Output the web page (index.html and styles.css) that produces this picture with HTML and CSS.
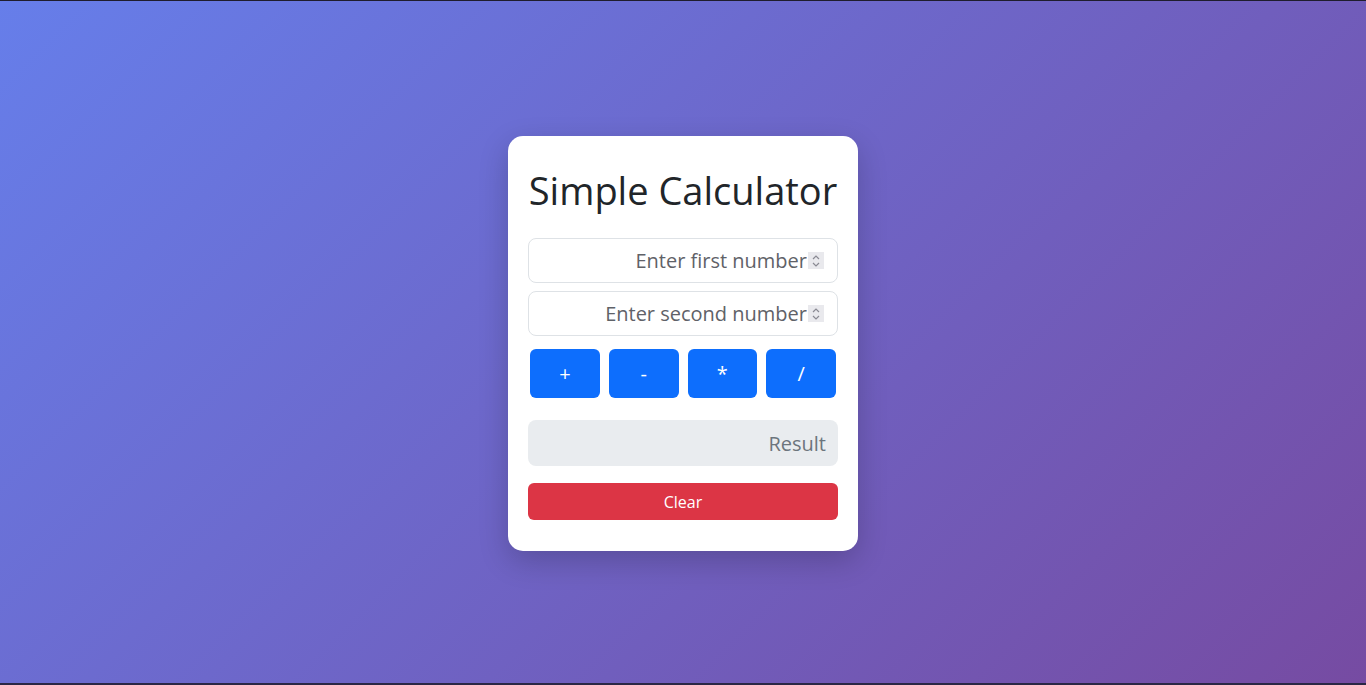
FILE: index.html
```html
<!DOCTYPE html>
<html lang="en">
<head>
<meta charset="utf-8">
<title>Simple Calculator</title>
<link rel="stylesheet" href="styles.css">
</head>
<body>
<main class="page">
  <section class="card">
    <h1 class="title">Simple Calculator</h1>
    <div class="field">
      <input class="field-input" type="text" placeholder="Enter first number">
      <span class="spin"><svg width="12" height="16" viewBox="0 0 12 16"><path d="M3 6 L6 3 L9 6" fill="none" stroke="#8a8a93" stroke-width="1.2"/><path d="M3 10 L6 13 L9 10" fill="none" stroke="#8a8a93" stroke-width="1.2"/></svg></span>
    </div>
    <div class="field">
      <input class="field-input" type="text" placeholder="Enter second number">
      <span class="spin"><svg width="12" height="16" viewBox="0 0 12 16"><path d="M3 6 L6 3 L9 6" fill="none" stroke="#8a8a93" stroke-width="1.2"/><path d="M3 10 L6 13 L9 10" fill="none" stroke="#8a8a93" stroke-width="1.2"/></svg></span>
    </div>
    <div class="ops">
      <button class="op">+</button>
      <button class="op">-</button>
      <button class="op">*</button>
      <button class="op">/</button>
    </div>
    <div class="result">Result</div>
    <button class="clear">Clear</button>
  </section>
</main>
</body>
</html>
```

FILE: styles.css
```css
* { box-sizing: border-box; }
html, body { margin: 0; height: 100%; }
body {
  font-family: "Open Sans", "Noto Sans", sans-serif;
  background: linear-gradient(135deg, #667eea 0%, #764ba2 100%);
  border-top: 1px solid #1f1d2e;
  border-bottom: 2px solid #2a2745;
}
.page {
  height: 100%;
  display: flex;
  align-items: flex-start;
  justify-content: center;
  padding-top: 135px;
}
.card {
  width: 350px;
  background: #fff;
  border-radius: 15px;
  padding: 30px 20px 30px;
  box-shadow: 0 10px 30px rgba(0,0,0,0.2);
  display: flex;
  flex-direction: column;
}
.title {
  margin: 0 0 24px;
  font-weight: 400;
  font-size: 38px;
  line-height: 48px;
  color: #212529;
  text-align: center;
  white-space: nowrap;
}
.field {
  height: 45px;
  border: 1px solid #dee2e6;
  border-radius: 8px;
  display: flex;
  align-items: center;
  padding: 0 13px 0 12px;
  margin-bottom: 8px;
}
.field-input {
  flex: 1;
  min-width: 0;
  border: 0;
  outline: none;
  background: transparent;
  text-align: right;
  font-family: inherit;
  font-size: 20px;
  color: #212529;
  padding: 0;
}
.field-input::placeholder { color: #5f6268; }
.spin {
  width: 16px;
  height: 17px;
  background: #e9e9ed;
  display: flex;
  align-items: center;
  justify-content: center;
  margin-left: 1px;
}
.ops {
  display: grid;
  grid-template-columns: repeat(4, 1fr);
  gap: 9px;
  padding: 0 2px;
  margin: 5px 0 22px;
}
.op {
  height: 49px;
  border: 0;
  border-radius: 6px;
  background: #0d6efd;
  color: #fff;
  font-family: inherit;
  font-size: 20px;
  padding: 0;
}
.result {
  height: 46px;
  border-radius: 8px;
  background: #e9ecef;
  color: #6c757d;
  font-size: 20px;
  display: flex;
  align-items: center;
  justify-content: flex-end;
  padding: 0 12px;
  margin-bottom: 17px;
}
.clear {
  height: 37px;
  border: 0;
  border-radius: 6px;
  background: #dc3545;
  color: #fff;
  font-family: inherit;
  font-size: 16px;
  padding: 0;
  margin-bottom: 1px;
}
```
